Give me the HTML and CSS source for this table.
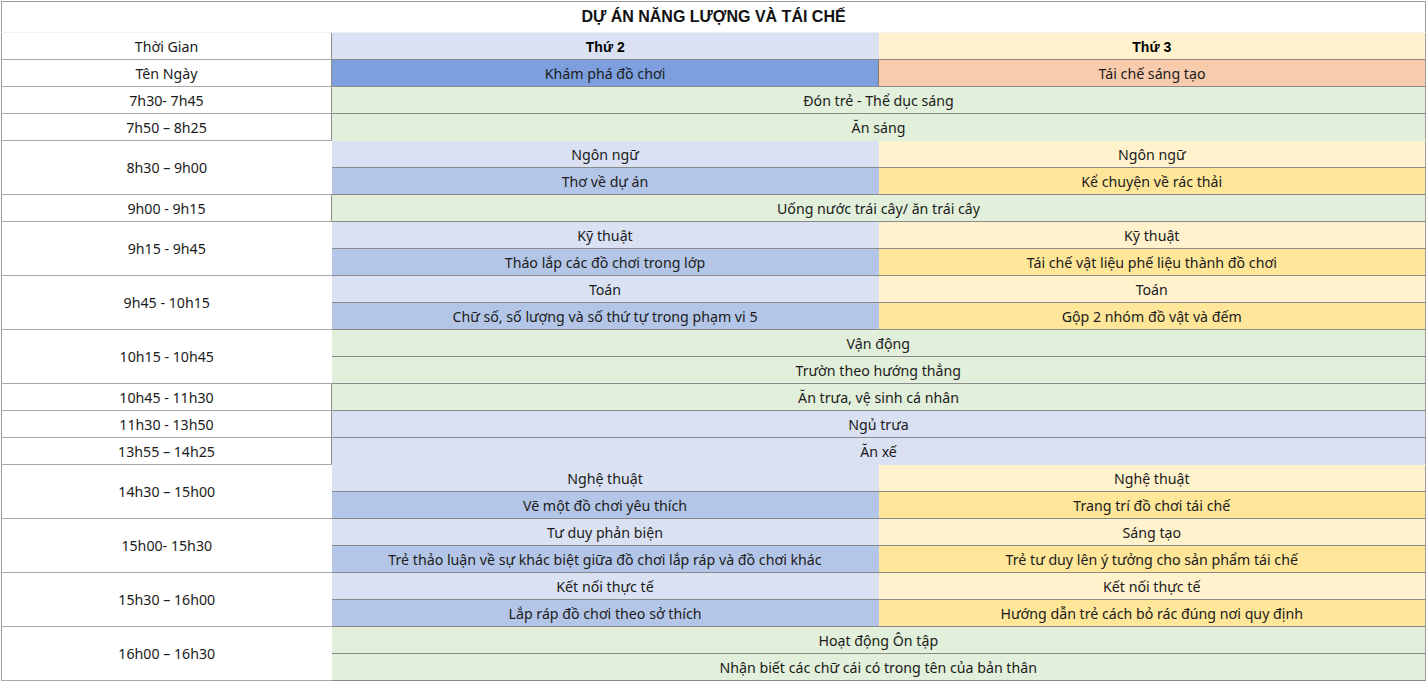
FILE: index.html
```html
<!DOCTYPE html>
<html lang="vi">
<head>
<meta charset="utf-8">
<title>Dự án năng lượng và tái chế</title>
<link rel="stylesheet" href="styles.css">
</head>
<body>
<table class="sched">
  <colgroup>
    <col class="c-time">
    <col class="c-day">
    <col class="c-day">
  </colgroup>
  <tr class="title-row"><td colspan="3" class="title">DỰ ÁN NĂNG LƯỢNG VÀ TÁI CHẾ</td></tr>
  <tr><td class="t">Thời Gian</td><td class="lav hd">Thứ 2</td><td class="ylw hd">Thứ 3</td></tr>
  <tr><td class="t">Tên Ngày</td><td class="blue dk">Khám phá đồ chơi</td><td class="peach dk">Tái chế sáng tạo</td></tr>
  <tr><td class="t">7h30- 7h45</td><td colspan="2" class="grn">Đón trẻ - Thể dục sáng</td></tr>
  <tr><td class="t">7h50 – 8h25</td><td colspan="2" class="grn nb">Ăn sáng</td></tr>
  <tr><td rowspan="2" class="t t2">8h30 – 9h00</td><td class="lav">Ngôn ngữ</td><td class="ylw">Ngôn ngữ</td></tr>
  <tr><td class="mblue">Thơ về dự án</td><td class="gold">Kể chuyện về rác thải</td></tr>
  <tr><td class="t">9h00 - 9h15</td><td colspan="2" class="grn">Uống nước trái cây/ ăn trái cây</td></tr>
  <tr><td rowspan="2" class="t t2">9h15 - 9h45</td><td class="lav">Kỹ thuật</td><td class="ylw">Kỹ thuật</td></tr>
  <tr><td class="mblue">Tháo lắp các đồ chơi trong lớp</td><td class="gold">Tái chế vật liệu phế liệu thành đồ chơi</td></tr>
  <tr><td rowspan="2" class="t t2">9h45 - 10h15</td><td class="lav">Toán</td><td class="ylw">Toán</td></tr>
  <tr><td class="mblue">Chữ số, số lượng và số thứ tự trong phạm vi 5</td><td class="gold">Gộp 2 nhóm đồ vật và đếm</td></tr>
  <tr><td rowspan="2" class="t t2">10h15 - 10h45</td><td colspan="2" class="grn">Vận động</td></tr>
  <tr><td colspan="2" class="grn">Trườn theo hướng thẳng</td></tr>
  <tr><td class="t">10h45 - 11h30</td><td colspan="2" class="grn">Ăn trưa, vệ sinh cá nhân</td></tr>
  <tr><td class="t">11h30 - 13h50</td><td colspan="2" class="lav">Ngủ trưa</td></tr>
  <tr><td class="t">13h55 – 14h25</td><td colspan="2" class="lav nb">Ăn xế</td></tr>
  <tr><td rowspan="2" class="t t2">14h30 – 15h00</td><td class="lav">Nghệ thuật</td><td class="ylw">Nghệ thuật</td></tr>
  <tr><td class="mblue">Vẽ một đồ chơi yêu thích</td><td class="gold">Trang trí đồ chơi tái chế</td></tr>
  <tr><td rowspan="2" class="t t2">15h00- 15h30</td><td class="lav">Tư duy phản biện</td><td class="ylw">Sáng tạo</td></tr>
  <tr><td class="mblue">Trẻ thảo luận về sự khác biệt giữa đồ chơi lắp ráp và đồ chơi khác</td><td class="gold">Trẻ tư duy lên ý tưởng cho sản phẩm tái chế</td></tr>
  <tr><td rowspan="2" class="t t2">15h30 – 16h00</td><td class="lav">Kết nối thực tế</td><td class="ylw">Kết nối thực tế</td></tr>
  <tr><td class="mblue">Lắp ráp đồ chơi theo sở thích</td><td class="gold">Hướng dẫn trẻ cách bỏ rác đúng nơi quy định</td></tr>
  <tr><td rowspan="2" class="t t2">16h00 – 16h30</td><td colspan="2" class="grn">Hoạt động Ôn tập</td></tr>
  <tr><td colspan="2" class="grn">Nhận biết các chữ cái có trong tên của bản thân</td></tr>
</table>
</body>
</html>
```

FILE: styles.css
```css
html, body {
  margin: 0;
  padding: 0;
  background: #ffffff;
}
body {
  padding: 1px 0 0 1px;
}
.sched {
  border-collapse: collapse;
  table-layout: fixed;
  width: 1425px;
  border: 1px solid #9c9c9c;
  font-family: "Noto Sans", "Open Sans", sans-serif;
  font-size: 14.2px;
  color: #1b1b1b;
}
.c-time { width: 330px; }
.c-day { width: 547px; }
.sched td {
  height: 26px;
  padding: 1px 4px 0;
  box-sizing: border-box;
  text-align: center;
  vertical-align: middle;
  line-height: 18px;
  white-space: nowrap;
  border-bottom: 1px solid #8a8a8a;
}
.sched tr { height: 27px; }
.sched tr.title-row { height: 31px; }
.sched .title-row td {
  height: 31px;
  padding-top: 0;
  border-bottom: 1px solid #f0f0f0;
}
.title {
  font-family: "Liberation Sans", Arial, sans-serif;
  font-weight: bold;
  font-size: 16px;
  color: #111;
  background: #ffffff;
}
.sched td.t {
  background: #ffffff;
  border-bottom: 1px solid #a9a9a9;
  border-right: 1px solid #8c8c8c;
}
.sched td.t2 {
  border-right: none;
}
.hd {
  font-family: "Liberation Sans", Arial, sans-serif;
  font-weight: bold;
  font-size: 14px;
  color: #000;
}
.lav { background: #d9e1f2; }
.ylw { background: #fff2cc; }
.blue { background: #7e9fdd; }
.peach { background: #f8cbad; }
.grn { background: #e2efda; }
.mblue { background: #b4c6e7; }
.gold { background: #ffe699; }
.sched td.dk { border-right: 1px solid #8a7a6a; }
.sched td.peach { border-right: none; }
.sched td.nb { border-bottom-color: transparent; }
```
